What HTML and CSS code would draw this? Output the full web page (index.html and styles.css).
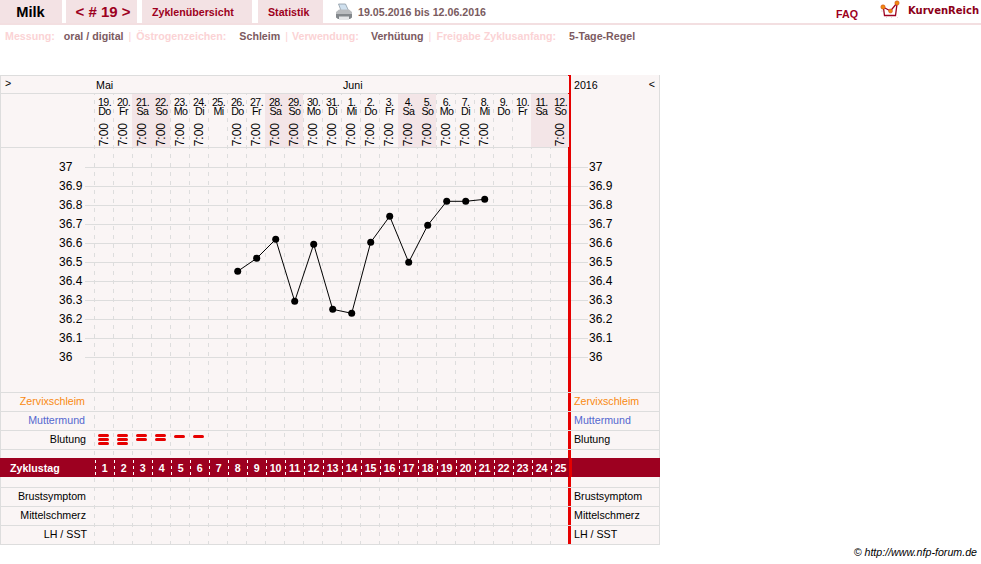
FILE: index.html
```html
<!DOCTYPE html>
<html lang="de">
<head>
<meta charset="utf-8">
<title>Milk</title>
<link rel="stylesheet" href="styles.css">
</head>
<body>
<header class="topbar">
  <div class="tab tab-name">Milk</div>
  <div class="tab tab-cycle">&lt; # 19 &gt;</div>
  <div class="tab tab-over">Zyklenübersicht</div>
  <div class="tab tab-stat">Statistik</div>
  <svg class="printer" width="18" height="18" viewBox="0 0 18 18">
    <path d="M3.500 1h7l3 6.500H6z" fill="#cfe0ee" stroke="#8e9aa5" stroke-width=".8"/>
    <path d="M1 9l3-2.500h10L17 9v4H1z" fill="#b9bcbf"/>
    <path d="M1 11h16v3.500l-2 1.500H3l-2-1.500z" fill="#83888c"/>
    <path d="M4 13.500h10V17H4z" fill="#e4e6e8"/>
  </svg>
  <div class="dates">19.05.2016 bis 12.06.2016</div>
  <div class="faq">FAQ</div>
  <svg class="logo" width="20" height="19" viewBox="0 0 20 19">
    <path d="M3.500 8l1 7.500h11L17 4" fill="none" stroke="#9d0020" stroke-width="1.300"/>
    <path d="M3 7l7.500 4L17 3" fill="none" stroke="#9d0020" stroke-width="1.300"/>
    <path d="M1 11h2M6 17.500h1M11 17.500h1M17 17.500h1" stroke="#e8d8d8"/>
    <circle cx="3" cy="7" r="2.200" fill="#f08a10" stroke="#c8401a" stroke-width=".5"/>
    <circle cx="10.500" cy="11" r="2" fill="#f08a10" stroke="#c8401a" stroke-width=".5"/>
    <circle cx="17" cy="3" r="2.200" fill="#f08a10" stroke="#c8401a" stroke-width=".5"/>
  </svg>
  <div class="brand">KurvenReich</div>
</header>

<div class="info">
  <span class="key">Messung:</span><span class="val val-1">oral / digital</span>
  <span class="sep">|</span><span class="key">Östrogenzeichen:</span><span class="val val-wide">Schleim</span>
  <span class="sep">|</span><span class="key key-3">Verwendung:</span><span class="val">Verhütung</span>
  <span class="sep">|</span><span class="key">Freigabe Zyklusanfang:</span><span class="val val-wide">5-Tage-Regel</span>
</div>

<main class="chart">
  <div class="row row-month">
    <div class="side toggle">&gt;</div>
    <div class="track months"><span class="m-mai">Mai</span><span class="m-jun">Juni</span></div>
    <div class="end end-year"><span>2016</span><span class="toggle-r">&lt;</span></div>
  </div>

  <div class="row row-days">
    <div class="side"></div>
    <div class="track days">
      <div class="day"><b>19.<br>Do</b><i>7:00</i></div>
      <div class="day"><b>20.<br>Fr</b><i>7:00</i></div>
      <div class="day we"><b>21.<br>Sa</b><i>7:00</i></div>
      <div class="day we"><b>22.<br>So</b><i>7:00</i></div>
      <div class="day"><b>23.<br>Mo</b><i>7:00</i></div>
      <div class="day"><b>24.<br>Di</b><i>7:00</i></div>
      <div class="day"><b>25.<br>Mi</b></div>
      <div class="day"><b>26.<br>Do</b><i>7:00</i></div>
      <div class="day"><b>27.<br>Fr</b><i>7:00</i></div>
      <div class="day we"><b>28.<br>Sa</b><i>7:00</i></div>
      <div class="day we"><b>29.<br>So</b><i>7:00</i></div>
      <div class="day"><b>30.<br>Mo</b><i>7:00</i></div>
      <div class="day"><b>31.<br>Di</b><i>7:00</i></div>
      <div class="day"><b>1.<br>Mi</b><i>7:00</i></div>
      <div class="day"><b>2.<br>Do</b><i>7:00</i></div>
      <div class="day"><b>3.<br>Fr</b><i>7:00</i></div>
      <div class="day we"><b>4.<br>Sa</b><i>7:00</i></div>
      <div class="day we"><b>5.<br>So</b><i>7:00</i></div>
      <div class="day"><b>6.<br>Mo</b><i>7:00</i></div>
      <div class="day"><b>7.<br>Di</b><i>7:00</i></div>
      <div class="day"><b>8.<br>Mi</b><i>7:00</i></div>
      <div class="day"><b>9.<br>Do</b></div>
      <div class="day"><b>10.<br>Fr</b></div>
      <div class="day we"><b>11.<br>Sa</b></div>
      <div class="day we"><b>12.<br>So</b><i>7:00</i></div>
    </div>
    <div class="end"></div>
  </div>

  <div class="row row-plot">
    <div class="side"></div>
    <div class="track"></div>
    <div class="end"></div>
    <svg class="plot-svg" width="658" height="244" viewBox="0 0 658 244">
      <path class="grid" d="M84 19.500H567M84 38.500H567M84 57.500H567M84 76.500H567M84 95.500H567M84 114.500H567M84 133.500H567M84 152.500H567M84 171.500H567M84 190.500H567M84 209.500H567"/>
      <path class="grid" d="M570 19.500H587M570 38.500H587M570 57.500H587M570 76.500H587M570 95.500H587M570 114.500H587M570 133.500H587M570 152.500H587M570 171.500H587M570 190.500H587M570 209.500H587"/>
      <g class="ticks">
        <text x="58" y="23">37</text><text x="58" y="42">36.9</text><text x="58" y="61">36.8</text><text x="58" y="80">36.7</text><text x="58" y="99">36.6</text><text x="58" y="118">36.5</text><text x="58" y="137">36.4</text><text x="58" y="156">36.3</text><text x="58" y="175">36.2</text><text x="58" y="194">36.1</text><text x="58" y="213">36</text>
      </g>
      <g class="ticks">
        <text x="588" y="23">37</text><text x="588" y="42">36.9</text><text x="588" y="61">36.8</text><text x="588" y="80">36.7</text><text x="588" y="99">36.6</text><text x="588" y="118">36.5</text><text x="588" y="137">36.4</text><text x="588" y="156">36.3</text><text x="588" y="175">36.2</text><text x="588" y="194">36.1</text><text x="588" y="213">36</text>
      </g>
      <polyline class="curve" points="236.700,123.300 255.700,110.300 274.700,91.300 293.700,153.300 312.700,96.300 331.700,161.300 350.700,165.300 369.700,94.300 388.700,68.300 407.700,114.300 426.700,77.300 445.700,53.300 464.700,53.300 483.700,51.300"/>
      <g class="dots">
        <circle cx="236.700" cy="123.300" r="3.500"/><circle cx="255.700" cy="110.300" r="3.500"/><circle cx="274.700" cy="91.300" r="3.500"/><circle cx="293.700" cy="153.300" r="3.500"/><circle cx="312.700" cy="96.300" r="3.500"/><circle cx="331.700" cy="161.300" r="3.500"/><circle cx="350.700" cy="165.300" r="3.500"/><circle cx="369.700" cy="94.300" r="3.500"/><circle cx="388.700" cy="68.300" r="3.500"/><circle cx="407.700" cy="114.300" r="3.500"/><circle cx="426.700" cy="77.300" r="3.500"/><circle cx="445.700" cy="53.300" r="3.500"/><circle cx="464.700" cy="53.300" r="3.500"/><circle cx="483.700" cy="51.300" r="3.500"/>
      </g>
    </svg>
  </div>

  <div class="row"><div class="side c-orange">Zervixschleim</div><div class="track"></div><div class="end c-orange">Zervixschleim</div></div>
  <div class="row"><div class="side c-blue">Muttermund</div><div class="track"></div><div class="end c-blue">Muttermund</div></div>
  <div class="row">
    <div class="side">Blutung</div>
    <div class="track bleed">
      <div class="b-cell"><span></span><span></span><span></span></div>
      <div class="b-cell"><span></span><span></span><span></span></div>
      <div class="b-cell"><span></span><span></span></div>
      <div class="b-cell"><span></span><span></span></div>
      <div class="b-cell b-one"><span></span></div>
      <div class="b-cell b-one"><span></span></div>
    </div>
    <div class="end">Blutung</div>
  </div>
  <div class="row row-gap"><div class="side"></div><div class="track"></div><div class="end"></div></div>

  <div class="row row-band">
    <div class="side">Zyklustag</div>
    <div class="track band-days">
      <span>1</span><span>2</span><span>3</span><span>4</span><span>5</span><span>6</span><span>7</span><span>8</span><span>9</span><span>10</span><span>11</span><span>12</span><span>13</span><span>14</span><span>15</span><span>16</span><span>17</span><span>18</span><span>19</span><span>20</span><span>21</span><span>22</span><span>23</span><span>24</span><span>25</span>
    </div>
    <div class="end"></div>
  </div>

  <div class="row row-gap2"><div class="side"></div><div class="track"></div><div class="end"></div></div>
  <div class="row"><div class="side">Brustsymptom</div><div class="track"></div><div class="end">Brustsymptom</div></div>
  <div class="row"><div class="side">Mittelschmerz</div><div class="track"></div><div class="end">Mittelschmerz</div></div>
  <div class="row"><div class="side side-lh">LH / SST</div><div class="track"></div><div class="end">LH / SST</div></div>
</main>

<footer class="copy">© http://www.nfp-forum.de</footer>
</body>
</html>
```
FILE: styles.css
```css
* { box-sizing: border-box; }
html, body { margin: 0; padding: 0; }
body {
  width: 981px;
  height: 564px;
  overflow: hidden;
  background: #fff;
  font-family: "Liberation Sans", Arial, sans-serif;
  font-size: 10.670px;
  color: #000;
}

/* top bar */
.topbar {
  display: flex;
  align-items: flex-start;
  height: 25px;
  border-bottom: 2px solid #f3dfe1;
}
.tab {
  height: 23px;
  background: #f3e2e4;
  color: #9d0020;
  font-weight: bold;
  line-height: 24px;
  white-space: nowrap;
}
.tab-name { width: 62px; padding-right: 1px; color: #000; font-size: 14.670px; text-align: center; }
.tab-cycle { width: 71px; margin-left: 4px; padding-left: 3px; font-size: 15px; text-align: center; }
.tab-over { width: 110px; margin-left: 5px; padding-left: 10px; }
.tab-stat { width: 65px; margin-left: 6px; padding-left: 10px; }
.printer { margin: 3px 0 0 12px; }
.dates { margin-left: 5px; font-weight: bold; color: #7a5b60; line-height: 25px; }
.faq { margin-left: auto; margin-top: 2px; color: #9d0020; font-weight: bold; line-height: 25px; }
.logo { margin: 0 0 0 22px; }
.brand {
  margin: 0 1px 0 8px;
  width: 72px;
  font-family: "DejaVu Sans", sans-serif;
  font-size: 10px;
  line-height: 21px;
  font-weight: bold;
  color: #8c0018;
  white-space: nowrap;
}

/* info line */
.info {
  display: flex;
  height: 22px;
  line-height: 22px;
  font-weight: bold;
  white-space: nowrap;
}
.key { color: #fbd3d5; margin-left: 5px; }
.key-3 { margin-left: 4px; }
.sep { color: #fbd3d5; margin-left: 5px; font-weight: normal; }
.val { color: #7c5a5f; margin-left: 12px; }
.val-1 { margin-left: 9px; }
.val-wide { margin-left: 13px; }

/* chart: the dash tile shows through the transparent day columns */
.chart {
  margin-top: 28px;
  width: 660px;
  border: 1px solid #ddd;
  border-bottom: 0;
  background-color: #faf5f5;
  background-image: url("data:image/svg+xml,%3Csvg xmlns='http://www.w3.org/2000/svg' width='19' height='9'%3E%3Crect width='1' height='4' fill='%23dddddd'/%3E%3C/svg%3E");
  background-position: 93px 6px;
}
.row {
  display: flex;
  height: 19px;
  border-bottom: 1px solid #ddd;
}
.side {
  flex: 0 0 93px;
  padding-right: 8px;
  text-align: right;
  line-height: 16px;
  background: #faf5f5;
}
.side-lh { padding-right: 7px; }
.side.c-orange, .side.c-blue { padding-right: 9px; }
.track {
  flex: 0 0 475px;
  position: relative;
}
.end {
  flex: 1;
  margin-left: -1px;
  border-left: 3px solid #e60000;
  padding-left: 3px;
  line-height: 16px;
  background: #faf5f5;
}
.c-orange { color: #f98a12; }
.c-blue { color: #5468cf; }

.row-month { height: 18px; }
.row-month .end { margin-top: -1px; margin-bottom: -1px; line-height: 20px; }
.toggle { text-align: left; padding-left: 4px; line-height: 15px; }
.months { background: #faf5f5; line-height: 18px; }
.m-mai { position: absolute; left: 2px; }
.m-jun { position: absolute; left: 249px; }
.end-year { display: flex; justify-content: space-between; padding-right: 4px; }
.toggle-r { line-height: 18px; }

.row-days { height: 54px; }
.row-days .end { margin-bottom: -1px; }
.days { display: flex; }
.day {
  flex: 0 0 19px;
  display: flex;
  flex-direction: column;
  align-items: center;
  padding-left: 1px;
}
.day.we { background: #f3e5e7; }
.day b {
  margin: 4px 0 0 1px;
  font-weight: normal;
  letter-spacing: -.6px;
  line-height: 9px;
  text-align: center;
}
.day i {
  margin-top: 7px;
  font-style: normal;
  font-size: 12px;
  line-height: 12px;
  writing-mode: vertical-rl;
  transform: rotate(180deg);
}

.row-plot { height: 245px; position: relative; }
.plot-svg { position: absolute; left: 0; top: 0; }
.grid { stroke: #ddd; stroke-width: 1; fill: none; }
.ticks text { font-size: 12px; fill: #000; }
.curve { fill: none; stroke: #000; stroke-width: 1; }
.dots circle { fill: #000; }

.bleed { display: flex; }
.b-cell {
  flex: 0 0 19px;
  display: flex;
  flex-direction: column;
  align-items: flex-start;
  gap: 1px;
  padding: 3px 0 0 4px;
}
.b-one { padding-top: 4px; }
.b-cell span {
  width: 11px;
  height: 3px;
  border-radius: 2px;
  background: #e60000;
}

.row-gap { height: 8px; border: 0; }
.row-band {
  margin: 0 -1px;
  border: 0;
  background: #9d0020;
  color: #fff;
  font-weight: bold;
}
.row-band .side {
  flex: 0 0 95px;
  text-align: left;
  padding: 0 0 0 10px;
  line-height: 20px;
  background: none;
}
.band-days {
  display: flex;
  background: url("data:image/svg+xml,%3Csvg xmlns='http://www.w3.org/2000/svg' width='19' height='6'%3E%3Crect width='1' height='3' fill='%23ffffff'/%3E%3C/svg%3E") 0 2px;
}
.band-days span {
  flex: 0 0 19px;
  text-align: center;
  line-height: 20px;
  letter-spacing: -.2px;
}
.row-band .end { background: #9d0020; }
.row-gap2 { height: 11px; }

.copy {
  text-align: right;
  padding-right: 4px;
  font-style: italic;
  line-height: 14px;
}
```
